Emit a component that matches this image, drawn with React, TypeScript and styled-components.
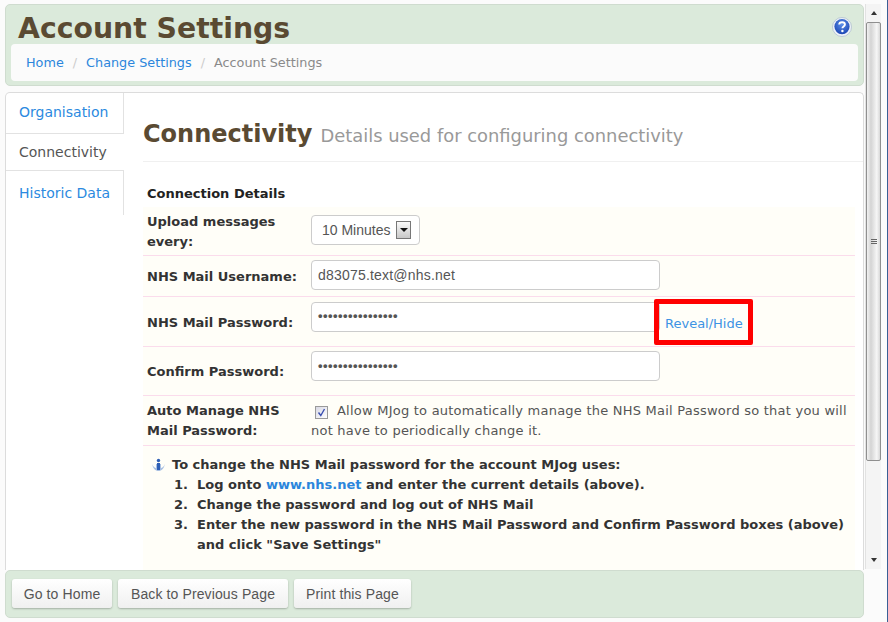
import React from "react";
import styled, { createGlobalStyle } from "styled-components";

const GlobalStyle = createGlobalStyle`
  html, body {
    margin: 0;
    padding: 0;
    height: 622px;
    overflow: hidden;
    background: #fff;
    font-family: "DejaVu Sans", Verdana, sans-serif;
  }
`;

const Page = styled.div`
  display: flex;
  width: 888px;
  height: 622px;
  background: #fbfbfb;
`;

const Column = styled.div`
  width: 859px;
  margin-left: 5px;
  padding-top: 4px;
  display: flex;
  flex-direction: column;
`;

const Header = styled.header`
  position: relative;
  height: 82px;
  box-sizing: border-box;
  background: #dbeadb;
  border: 1px solid #cfdccf;
  border-radius: 5px;
  padding: 39px 5px 0 5px;
`;

const Title = styled.h1`
  position: absolute;
  left: 12px;
  top: 6px;
  margin: 0;
  font-size: 28.3px;
  line-height: 36px;
  font-weight: 700;
  color: #5a4a32;
`;

const HelpIcon = styled.svg`
  position: absolute;
  right: 11px;
  top: 12px;
`;

const Breadcrumb = styled.nav`
  height: 37px;
  box-sizing: border-box;
  background: #fbfbfb;
  border-radius: 4px;
  padding: 0 15px;
  display: flex;
  align-items: center;
  font-size: 12.8px;
`;

const CrumbLink = styled.a`
  color: #2b86dc;
`;

const CrumbSep = styled.span`
  color: #ccc;
  margin: 0 9px;
`;

const CrumbCurrent = styled.span`
  color: #8a8a8a;
`;

const Panel = styled.main`
  margin-top: 6px;
  height: 478px;
  box-sizing: border-box;
  display: flex;
  background: #fff;
  border: 1px solid #dcdcdc;
  border-bottom: none;
  border-radius: 5px 5px 0 0;
  overflow: hidden;
`;

const Tabs = styled.ul`
  list-style: none;
  margin: 0;
  padding: 0;
  width: 118px;
  flex: none;
`;

const Tab = styled.li<{ $active?: boolean; $height: number }>`
  height: ${(p) => p.$height}px;
  box-sizing: border-box;
  padding-left: 13px;
  display: flex;
  align-items: center;
  font-size: 14px;
  color: ${(p) => (p.$active ? "#555" : "#2b8ae0")};
  border-right: ${(p) => (p.$active ? "none" : "1px solid #e2e2e2")};
  border-bottom: 1px solid #e2e2e2;
  &:first-child {
    padding-bottom: 2px;
  }
  &:last-child {
    border-bottom: none;
  }
`;

const Content = styled.section`
  flex: 1;
  margin-left: 19px;
  min-width: 0;
`;

const Heading = styled.div`
  height: 69px;
  box-sizing: border-box;
  border-bottom: 1px solid #f0f0f0;
  padding-top: 23px;
  display: flex;
  align-items: baseline;
  white-space: nowrap;
`;

const HeadingMain = styled.h2`
  margin: 0;
  font-size: 24px;
  line-height: 36px;
  font-weight: 700;
  color: #5a4a32;
`;

const HeadingSub = styled.span`
  margin-left: 8px;
  font-size: 17.9px;
  color: #999;
`;

const SectionLabel = styled.div`
  height: 45px;
  box-sizing: border-box;
  padding: 24px 0 0 4px;
  font-size: 13px;
  line-height: 16px;
  font-weight: 700;
  color: #222;
`;

const Form = styled.div`
  background: #fffef8;
  height: 363px;
  margin-right: 8px;
`;

const Row = styled.div<{ $height: number }>`
  position: relative;
  height: ${(p) => p.$height}px;
  box-sizing: border-box;
  display: flex;
  align-items: center;
  border-bottom: 1px solid #fbdcec;
`;

const Label = styled.label<{ $flush?: boolean }>`
  width: 168px;
  flex: none;
  box-sizing: border-box;
  padding-left: 4px;
  padding-right: 14px;
  margin-top: ${(p) => (p.$flush ? "0" : "2px")};
  font-size: 13px;
  line-height: 20px;
  font-weight: 700;
  color: #333;
`;

const Input = styled.div<{ $dots?: boolean; $lift: number }>`
  width: 349px;
  height: 30px;
  box-sizing: border-box;
  margin-bottom: ${(p) => p.$lift}px;
  background: #fff;
  border: 1px solid #ccc;
  border-radius: 4px;
  padding-left: 6px;
  display: flex;
  align-items: center;
  font-family: "Liberation Sans", Arial, sans-serif;
  font-size: ${(p) => (p.$dots ? "13px" : "14px")};
  font-weight: ${(p) => (p.$dots ? 700 : 400)};
  letter-spacing: ${(p) => (p.$dots ? "0.45px" : "0.2px")};
  color: #555;
  padding-bottom: ${(p) => (p.$dots ? "2px" : "0")};
`;

const Select = styled.div`
  width: 109px;
  height: 30px;
  box-sizing: border-box;
  margin-bottom: 2px;
  background: #fff;
  border: 1px solid #ccc;
  border-radius: 4px;
  padding-left: 10px;
  display: flex;
  align-items: center;
  gap: 6px;
  font-family: "Liberation Sans", Arial, sans-serif;
  font-size: 14px;
  color: #555;
`;

const SelectArrow = styled.span`
  width: 15px;
  height: 18px;
  box-sizing: border-box;
  border: 1px solid #777;
  background: linear-gradient(#fafafa, #c8c8c8);
  display: flex;
  align-items: center;
  justify-content: center;
  &::after {
    content: "";
    border-left: 4px solid transparent;
    border-right: 4px solid transparent;
    border-top: 4px solid #111;
  }
`;

const RevealLink = styled.a`
  margin-left: 5px;
  margin-top: 4px;
  font-size: 13px;
  color: #3d93e4;
`;

const Highlight = styled.span`
  position: absolute;
  left: 511px;
  top: 2px;
  width: 99px;
  height: 46px;
  box-sizing: border-box;
  border: 5px solid #f00;
  border-radius: 2px;
`;

const CheckText = styled.div`
  flex: 1;
  font-size: 13px;
  line-height: 20px;
  color: #555;
  letter-spacing: 0.23px;
`;

const CheckBox = styled.span`
  display: inline-flex;
  align-items: center;
  justify-content: center;
  width: 13px;
  height: 13px;
  box-sizing: border-box;
  margin: 0 9px 0 4px;
  vertical-align: -2px;
  background: linear-gradient(135deg, #d8d8e4, #fff);
  border: 1px solid #9a9a9a;
`;

const Notes = styled.div`
  padding: 9px 0 0 8px;
  font-size: 13px;
  line-height: 20px;
  font-weight: 700;
  color: #333;
`;

const NoteHead = styled.div`
  display: flex;
  align-items: center;
  gap: 6px;
`;

const Steps = styled.ol`
  margin: 0;
  padding: 0 0 0 46px;
  li::marker {
    content: counter(list-item) ".\\00a0\\00a0";
  }
`;

const NoteLink = styled.a`
  color: #2b86dc;
`;

const Footer = styled.footer`
  height: 48px;
  box-sizing: border-box;
  background: #dbeadb;
  border: 1px solid #cfdccf;
  border-radius: 5px;
  padding: 8px 6px;
  display: flex;
  gap: 6px;
`;

const Button = styled.button<{ $width: number }>`
  width: ${(p) => p.$width}px;
  height: 29px;
  box-sizing: border-box;
  padding: 0;
  background: linear-gradient(#ffffff, #f0f0f0);
  border: none;
  border-radius: 3px;
  box-shadow: 0 1px 2px rgba(0, 0, 0, 0.25);
  font-family: "Liberation Sans", Arial, sans-serif;
  font-size: 14px;
  letter-spacing: 0.12px;
  color: #555;
`;

const Scrollbar = styled.div`
  width: 16px;
  box-sizing: border-box;
  flex: none;
  margin-left: 1px;
  margin-top: 4px;
  height: 565px;
  display: flex;
  flex-direction: column;
  align-items: stretch;
  background: #f4f4f4;
  border-left: 1px solid #e2e2e2;
`;

const ScrollButton = styled.div`
  height: 18px;
  flex: none;
  display: flex;
  align-items: center;
  justify-content: center;
`;

const ScrollArrow = styled.span<{ $down?: boolean }>`
  border-left: 3px solid transparent;
  border-right: 3px solid transparent;
  border-${(p) => (p.$down ? "top" : "bottom")}: 4px solid #333;
`;

const ScrollThumb = styled.div`
  height: 439px;
  flex: none;
  box-sizing: border-box;
  border: 1px solid #8f8f8f;
  border-radius: 2px;
  background: linear-gradient(90deg, #f2f2f2, #d4d4d4 30%, #f6f6f6 75%, #d8d8d8);
  display: flex;
  align-items: center;
  justify-content: center;
  &::after {
    content: "";
    width: 6px;
    height: 6px;
    background: repeating-linear-gradient(#666 0 1px, transparent 1px 2px);
  }
`;

const ScrollTrack = styled.div`
  flex: 1;
`;

const WindowEdge = styled.div`
  width: 1px;
  flex: none;
  margin-left: 6px;
  background: #3a5f95;
`;

export default function App() {
  return (
    <>
      <GlobalStyle />
      <Page>
        <Column>
          <Header>
            <Title>Account Settings</Title>
            <HelpIcon width="20" height="20" viewBox="0 0 20 20">
              <defs>
                <radialGradient id="helpBlue" cx="50%" cy="35%" r="65%">
                  <stop offset="0%" stopColor="#5c8fe8" />
                  <stop offset="100%" stopColor="#1b46b4" />
                </radialGradient>
              </defs>
              <circle cx="10" cy="10" r="9.5" fill="#eef2f8" stroke="#9fb0c8" strokeWidth="0.6" />
              <circle cx="10" cy="9.6" r="7.6" fill="url(#helpBlue)" />
              <path
                d="M7.2 7.6c0-1.6 1.2-2.4 2.9-2.4s2.8 0.9 2.8 2.2c0 2-2.5 2-2.5 3.8"
                fill="none"
                stroke="#fff"
                strokeWidth="1.9"
              />
              <circle cx="10.4" cy="14" r="1.2" fill="#fff" />
            </HelpIcon>
            <Breadcrumb>
              <CrumbLink>Home</CrumbLink>
              <CrumbSep>/</CrumbSep>
              <CrumbLink>Change Settings</CrumbLink>
              <CrumbSep>/</CrumbSep>
              <CrumbCurrent>Account Settings</CrumbCurrent>
            </Breadcrumb>
          </Header>
          <Panel>
            <Tabs>
              <Tab $height={41}>Organisation</Tab>
              <Tab $height={37} $active>Connectivity</Tab>
              <Tab $height={44}>Historic Data</Tab>
            </Tabs>
            <Content>
              <Heading>
                <HeadingMain>Connectivity</HeadingMain>
                <HeadingSub>Details used for configuring connectivity</HeadingSub>
              </Heading>
              <SectionLabel>Connection Details</SectionLabel>
              <Form>
                <Row $height={49}>
                  <Label>Upload messages every:</Label>
                  <Select>
                    10 Minutes
                    <SelectArrow />
                  </Select>
                </Row>
                <Row $height={41}>
                  <Label>NHS Mail Username:</Label>
                  <Input $lift={2}>d83075.text@nhs.net</Input>
                </Row>
                <Row $height={50}>
                  <Label>NHS Mail Password:</Label>
                  <Input $dots $lift={10}>••••••••••••••••</Input>
                  <RevealLink>Reveal/Hide</RevealLink>
                  <Highlight />
                </Row>
                <Row $height={49}>
                  <Label>Confirm Password:</Label>
                  <Input $dots $lift={10}>••••••••••••••••</Input>
                </Row>
                <Row $height={50}>
                  <Label $flush>Auto Manage NHS Mail Password:</Label>
                  <CheckText>
                    <CheckBox>
                      <svg width="9" height="9" viewBox="0 0 9 9">
                        <path d="M1.5 4.5 L3.8 7.5 L7.5 1" fill="none" stroke="#3a4fb0" strokeWidth="1.4" />
                      </svg>
                    </CheckBox>
                    Allow MJog to automatically manage the NHS Mail Password so that you will not have to
                    periodically change it.
                  </CheckText>
                </Row>
                <Notes>
                  <NoteHead>
                    <svg width="15" height="14" viewBox="0 0 15 14">
                      <path d="M1 6c1 4.5 3.5 7 6.5 7s5.500-2.500 6.500-7c-1 2.500-3 4-4 4V6H5v4C4 10 2 8.500 1 6z" fill="#a8bfe2" />
                      <rect x="6" y="5" width="3" height="7" fill="#2f5fb5" />
                      <circle cx="7.500" cy="2.500" r="1.700" fill="#2f5fb5" />
                    </svg>
                    To change the NHS Mail password for the account MJog uses:
                  </NoteHead>
                  <Steps>
                    <li>
                      Log onto <NoteLink>www.nhs.net</NoteLink> and enter the current details (above).
                    </li>
                    <li>Change the password and log out of NHS Mail</li>
                    <li>
                      Enter the new password in the NHS Mail Password and Confirm Password boxes (above) and
                      click "Save Settings"
                    </li>
                  </Steps>
                </Notes>
              </Form>
            </Content>
          </Panel>
          <Footer>
            <Button $width={100}>Go to Home</Button>
            <Button $width={170}>Back to Previous Page</Button>
            <Button $width={117}>Print this Page</Button>
          </Footer>
        </Column>
        <Scrollbar>
          <ScrollButton>
            <ScrollArrow />
          </ScrollButton>
          <ScrollThumb />
          <ScrollTrack />
          <ScrollButton>
            <ScrollArrow $down />
          </ScrollButton>
        </Scrollbar>
        <WindowEdge />
      </Page>
    </>
  );
}
